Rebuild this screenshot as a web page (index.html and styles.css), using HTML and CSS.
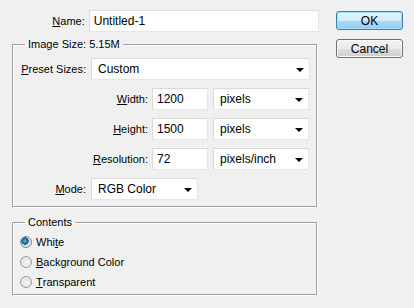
FILE: index.html
```html
<!DOCTYPE html>
<html lang="en">
<head>
    <meta charset="UTF-8">
    <meta name="viewport" content="width=device-width, initial-scale=1.0">
    <title>New</title>
    <link rel="stylesheet" href="styles.css">
</head>
<body>
    <div class="dialog">
        <div class="main">
            <!-- Name -->
            <div class="row name-row">
                <label class="label short"><u>N</u>ame:</label>
                <input type="text" class="field name-field" value="Untitled-1">
            </div>

            <!-- Image Size group -->
            <fieldset class="group size-group">
                <legend>Image Size: 5.15M</legend>

                <div class="row">
                    <label class="label short"><u>P</u>reset Sizes:</label>
                    <div class="select preset-select"><span>Custom</span><span class="arrow"></span></div>
                </div>
                <div class="row">
                    <label class="label long"><u>W</u>idth:</label>
                    <input type="text" class="field num-field" value="1200">
                    <div class="select unit-select"><span>pixels</span><span class="arrow"></span></div>
                </div>
                <div class="row">
                    <label class="label long"><u>H</u>eight:</label>
                    <input type="text" class="field num-field" value="1500">
                    <div class="select unit-select"><span>pixels</span><span class="arrow"></span></div>
                </div>
                <div class="row">
                    <label class="label long"><u>R</u>esolution:</label>
                    <input type="text" class="field num-field" value="72">
                    <div class="select unit-select"><span>pixels/inch</span><span class="arrow"></span></div>
                </div>
                <div class="row">
                    <label class="label short"><u>M</u>ode:</label>
                    <div class="select mode-select"><span>RGB Color</span><span class="arrow"></span></div>
                </div>
            </fieldset>

            <!-- Contents group -->
            <fieldset class="group contents-group">
                <legend>Contents</legend>
                <div class="radio-row"><span class="radio checked"></span>Whi<u>t</u>e</div>
                <div class="radio-row"><span class="radio"></span><u>B</u>ackground Color</div>
                <div class="radio-row"><span class="radio"></span><u>T</u>ransparent</div>
            </fieldset>
        </div>

        <div class="side">
            <button class="btn btn-ok">OK</button>
            <button class="btn btn-cancel">Cancel</button>
        </div>
    </div>
</body>
</html>
```

FILE: styles.css
```css
body {
    margin: 0;
    background-color: #f0f0f0;
    font-family: "Liberation Sans", Arial, sans-serif;
    font-size: 11px;
    color: #000;
}
.dialog {
    display: flex;
    width: 414px;
    height: 308px;
    padding-top: 10px;
    box-sizing: border-box;
}
.main {
    margin-left: 12px;
    width: 307px;
}
.row {
    display: flex;
    align-items: center;
    height: 22px;
}
.row + .row {
    margin-top: 8px;
}
.label {
    text-align: right;
    box-sizing: border-box;
    padding-right: 4px;
}
.name-row .label {
    width: 77px;
}
.group .label.short {
    width: 77px;
}
.group .label.long {
    width: 139px;
}
.field, .select {
    height: 22px;
    box-sizing: border-box;
    background: white;
    border: 1px solid #dadada;
    border-right-color: #e6e6e6;
    border-bottom-color: #e6e6e6;
    font-family: inherit;
    font-size: 12px;
    color: #000;
    padding: 0 4px;
    margin: 0;
    outline: none;
}
.name-field {
    width: 231px;
}
.num-field {
    width: 56px;
    margin-right: 5px;
}
.select {
    display: flex;
    align-items: center;
    justify-content: space-between;
    padding: 0 5px 0 6px;
}
.preset-select {
    width: 219px;
    margin-left: 1px;
}
.unit-select {
    width: 96px;
}
.mode-select {
    width: 107px;
    margin-left: 1px;
}
.arrow {
    width: 0;
    height: 0;
    border-left: 4px solid transparent;
    border-right: 4px solid transparent;
    border-top: 4px solid #000;
    margin-top: 1px;
}
.group {
    width: 305px;
    box-sizing: border-box;
    margin: 0;
    padding: 7px 0 6px 0;
    border: 1px solid #a0a0a0;
    box-shadow: 1px 1px 0 #fff, inset 1px 1px 0 #fff;
    min-inline-size: 0;
}
.group legend {
    margin-left: 12px;
    padding: 0 3px;
    line-height: 13px;
}
.size-group {
    margin-top: 6px;
}
.contents-group {
    margin-top: 9px;
    padding: 3px 0 2px 0;
}
.radio-row {
    display: flex;
    align-items: center;
    height: 20px;
    padding-left: 7px;
}
.radio {
    width: 12px;
    height: 12px;
    box-sizing: border-box;
    border-radius: 50%;
    border: 1px solid #9c9c9c;
    background: radial-gradient(circle at 60% 60%, #f4f4f4 0%, #dcdcdc 100%);
    margin-right: 4px;
    position: relative;
}
.radio.checked {
    border-color: #7a8ea0;
    background: radial-gradient(circle at 40% 40%, #5fb2e0 0, #1e6f9f 2.5px, #1c5a80 3.5px, #e8e8e8 4px, #d8d8d8 100%);
}
.side {
    display: flex;
    flex-direction: column;
    margin-left: 17px;
    margin-top: 1px;
}
.btn {
    width: 67px;
    height: 19px;
    box-sizing: border-box;
    border-radius: 3px;
    font-family: inherit;
    font-size: 12px;
    color: #000;
    padding: 0;
    line-height: 16px;
}
.btn-ok {
    border: 1px solid #3c7fb1;
    background: linear-gradient(#e5f5fd 0%, #d0ecfa 50%, #a9dbf6 51%, #93cfee 100%);
    box-shadow: inset 0 0 0 1px #9ee0fc;
}
.btn-cancel {
    margin-top: 9px;
    border: 1px solid #707070;
    background: linear-gradient(#f2f2f2 0%, #ebebeb 50%, #dddddd 51%, #cfcfcf 100%);
    box-shadow: inset 0 0 0 1px #fbfbfb;
}
```
